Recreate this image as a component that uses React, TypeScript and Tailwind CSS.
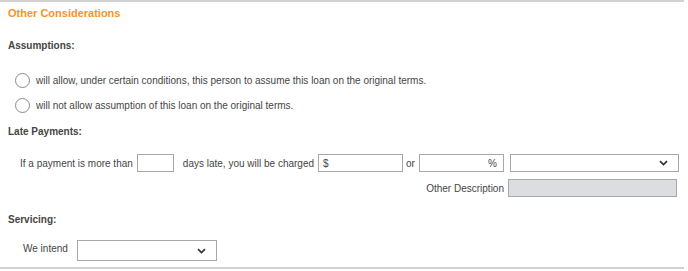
import React from "react"

function Chevron() {
  return (
    <svg width="9" height="6" viewBox="0 0 9 6" fill="none" className="ml-auto mr-[10px]">
      <path d="M1 1.2 L4.5 4.6 L8 1.2" stroke="#333" strokeWidth="1.7" />
    </svg>
  )
}

function Radio({ label }: { label: string }) {
  return (
    <label className="flex items-center h-[25px] pl-[15px]">
      <span className="w-[15px] h-[15px] rounded-full border border-[#8a8a8a] bg-white" />
      <span className="ml-[6px]">{label}</span>
    </label>
  )
}

export default function App() {
  return (
    <div className="w-[684px] border-t-2 border-b-2 border-[#d2d2d2] bg-white font-['Liberation_Sans',Arial,sans-serif] text-[10px] text-[#454545] whitespace-nowrap">
      <div className="h-[22px] flex items-center pl-2 font-bold text-[11px] text-[#f7941d]">
        Other Considerations
      </div>

      <div className="mt-[10px] h-[22px] flex items-center pl-2 font-bold">Assumptions:</div>

      <div className="mt-[12px]">
        <Radio label="will allow, under certain conditions, this person to assume this loan on the original terms." />
        <Radio label="will not allow assumption of this loan on the original terms." />
      </div>

      <div className="mt-[2px] h-[22px] flex items-center pl-2 font-bold">Late Payments:</div>

      <div className="mt-[12px] h-[18px] flex items-center pl-[20px]">
        <span>If a payment is more than</span>
        <div className="ml-[4px] w-[37px] h-[18px] border border-[#a8a8a8]" />
        <span className="ml-[9px]">days late, you will be charged</span>
        <div className="ml-[4px] w-[85px] h-[18px] border border-[#a8a8a8] flex items-center pl-[4px]">$</div>
        <span className="ml-[3px]">or</span>
        <div className="ml-[4px] w-[85px] h-[18px] border border-[#a8a8a8] flex items-center justify-end pr-[6px]">%</div>
        <div className="ml-[6px] w-[169px] h-[18px] border border-[#a8a8a8] flex items-center">
          <Chevron />
        </div>
      </div>

      <div className="mt-[7px] w-[677px] h-[18px] flex items-center justify-end">
        <span className="mr-[4px]">Other Description</span>
        <div className="w-[169px] h-[18px] border border-[#a8a8a8] bg-[#dcdde1]" />
      </div>

      <div className="mt-[11px] h-[22px] flex items-center pl-2 font-bold">Servicing:</div>

      <div className="mt-[10px] h-[21px] flex items-center pl-[23px]">
        <span className="-mt-[4px]">We intend</span>
        <div className="ml-[9px] w-[140px] h-[21px] border border-[#a8a8a8] flex items-center">
          <Chevron />
        </div>
      </div>

      <div className="h-[6px]" />
    </div>
  )
}
